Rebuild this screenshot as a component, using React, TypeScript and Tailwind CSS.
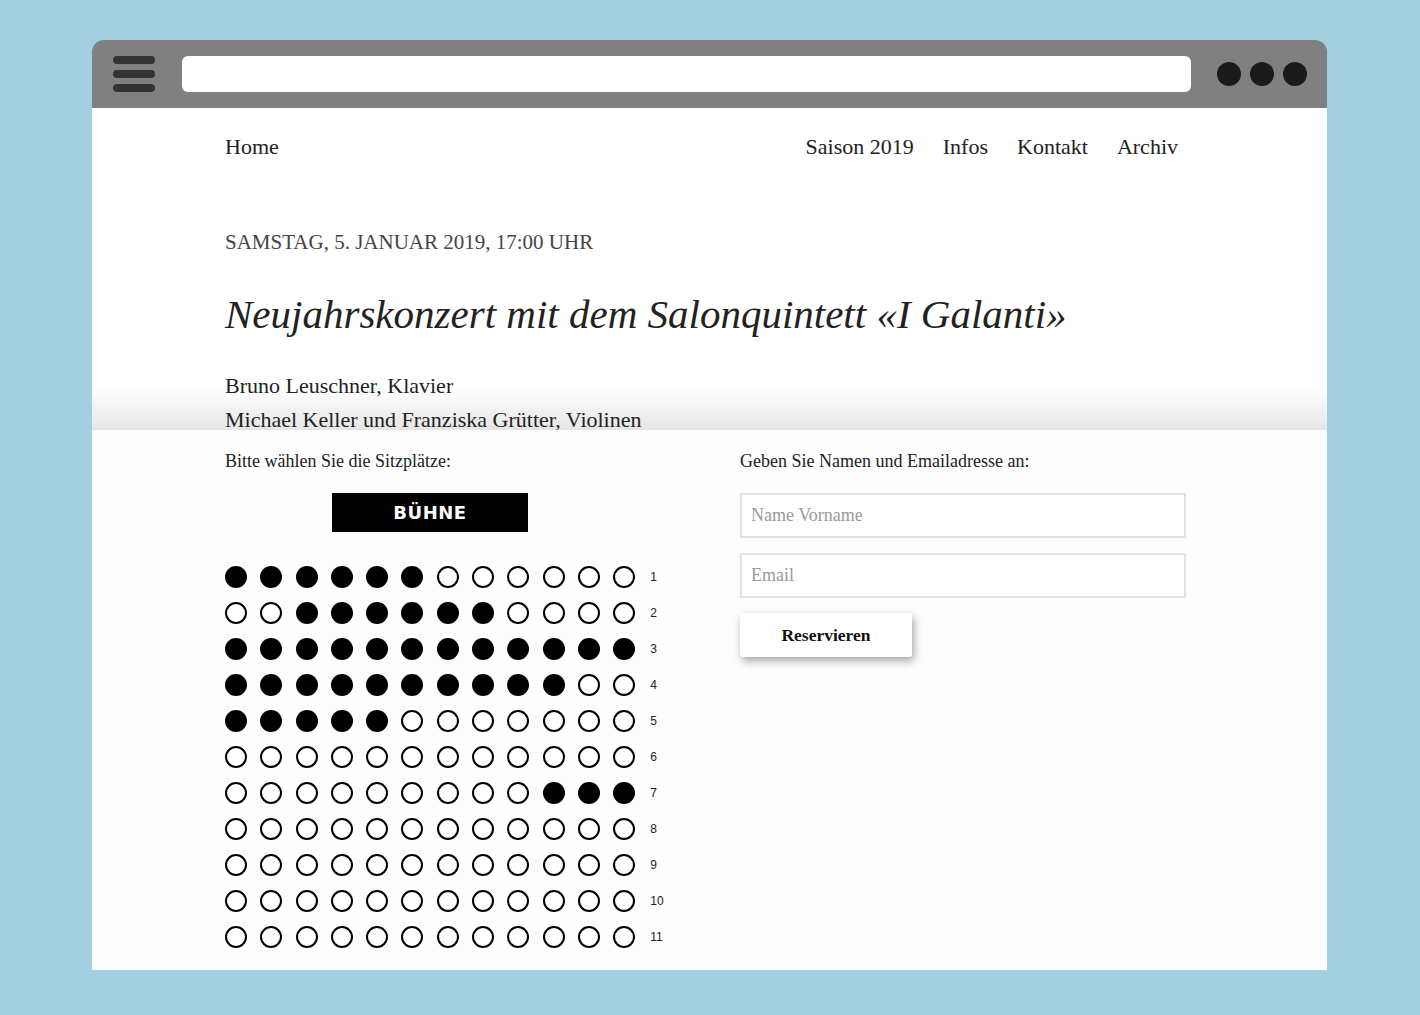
import React from 'react';

const serif = { fontFamily: "'Liberation Serif', 'Times New Roman', serif" };
const sans = { fontFamily: "'Liberation Sans', Arial, sans-serif" };
const heavy = { fontFamily: "'DejaVu Sans', 'Liberation Sans', sans-serif" };

// 1 = taken, 0 = free
const SEATS: number[][] = [
  [1, 1, 1, 1, 1, 1, 0, 0, 0, 0, 0, 0],
  [0, 0, 1, 1, 1, 1, 1, 1, 0, 0, 0, 0],
  [1, 1, 1, 1, 1, 1, 1, 1, 1, 1, 1, 1],
  [1, 1, 1, 1, 1, 1, 1, 1, 1, 1, 0, 0],
  [1, 1, 1, 1, 1, 0, 0, 0, 0, 0, 0, 0],
  [0, 0, 0, 0, 0, 0, 0, 0, 0, 0, 0, 0],
  [0, 0, 0, 0, 0, 0, 0, 0, 0, 1, 1, 1],
  [0, 0, 0, 0, 0, 0, 0, 0, 0, 0, 0, 0],
  [0, 0, 0, 0, 0, 0, 0, 0, 0, 0, 0, 0],
  [0, 0, 0, 0, 0, 0, 0, 0, 0, 0, 0, 0],
  [0, 0, 0, 0, 0, 0, 0, 0, 0, 0, 0, 0],
];

function Seat({ taken }: { taken: boolean }) {
  return taken ? (
    <div className="w-[22px] h-[22px] rounded-full bg-black" />
  ) : (
    <div className="w-[22px] h-[22px] rounded-full border-[2.5px] border-black bg-white" />
  );
}

function SeatMap() {
  return (
    <div className="flex flex-col gap-[14px]">
      {SEATS.map((row, r) => (
        <div key={r} className="flex items-center">
          <div className="flex gap-x-[13.3px]">
            {row.map((s, c) => (
              <Seat key={c} taken={s === 1} />
            ))}
          </div>
          <span className="ml-[15px] text-[12px] text-[#222]" style={sans}>{r + 1}</span>
        </div>
      ))}
    </div>
  );
}

function BrowserBar() {
  return (
    <div className="h-[68px] bg-[#808080] rounded-t-[12px] flex items-center px-[21px]">
      <div className="flex flex-col gap-[6px] w-[42px]">
        <div className="h-[8px] rounded-full bg-[#333333]" />
        <div className="h-[8px] rounded-full bg-[#333333]" />
        <div className="h-[8px] rounded-full bg-[#333333]" />
      </div>
      <div className="ml-[27px] h-[36px] flex-1 bg-white rounded-[6px]" />
      <div className="ml-[26px] mr-[-1px] flex gap-[9px]">
        <div className="w-[24px] h-[24px] rounded-full bg-[#1b1b1b]" />
        <div className="w-[24px] h-[24px] rounded-full bg-[#1b1b1b]" />
        <div className="w-[24px] h-[24px] rounded-full bg-[#1b1b1b]" />
      </div>
    </div>
  );
}

export default function App() {
  return (
    <div className="w-[1420px] h-[1015px] bg-[#a2d0de] pt-[40px] pl-[92px] overflow-hidden" style={serif}>
      <div className="w-[1235px]">
        <BrowserBar />
        <div className="bg-white h-[862px] flex flex-col">
          {/* Event header, scrolled under the booking panel */}
          <section className="relative h-[322px] overflow-hidden">
            <div className="absolute left-0 right-0 bottom-0 h-[42px] bg-gradient-to-b from-white/0 to-[#e6e6e6]" />
            <div className="relative px-[133px]">
              <nav className="flex justify-between items-center mt-[22px] text-[22px] text-[#222] pr-[16px]">
                <a>Home</a>
                <div className="flex gap-[29px]">
                  <a>Saison 2019</a>
                  <a>Infos</a>
                  <a>Kontakt</a>
                  <a>Archiv</a>
                </div>
              </nav>
              <p className="mt-[64px] text-[21px] text-[#444] leading-[30px]">SAMSTAG, 5. JANUAR 2019, 17:00 UHR</p>
              <h1 className="mt-[29px] text-[41px] italic text-[#222] leading-[56px]">
                Neujahrskonzert mit dem Salonquintett «I Galanti»
              </h1>
              <div className="mt-[27px] text-[22px] text-[#222] leading-[34px]">
                <p>Bruno Leuschner, Klavier</p>
                <p>Michael Keller und Franziska Grütter, Violinen</p>
              </div>
            </div>
          </section>

          {/* Reservation panel */}
          <section className="flex-1 bg-[#fdfdfd] px-[133px] flex">
            <div className="w-[515px]">
              <p className="mt-[20px] text-[18px] text-[#222] leading-[22px]">Bitte wählen Sie die Sitzplätze:</p>
              <div className="w-[410px] flex justify-center mt-[21px]">
                <div className="w-[196px] h-[39px] bg-black flex items-center justify-center">
                  <span className="text-white text-[18px] font-bold tracking-[0.5px]" style={heavy}>BÜHNE</span>
                </div>
              </div>
              <div className="mt-[34px]">
                <SeatMap />
              </div>
            </div>
            <div className="w-[446px]">
              <p className="mt-[20px] text-[18px] text-[#222] leading-[22px]">Geben Sie Namen und Emailadresse an:</p>
              <input
                placeholder="Name Vorname"
                className="mt-[21px] w-full h-[45px] border-2 border-[#e3e3e3] bg-white px-[9px] text-[18px] placeholder:text-[#9a9a9a] outline-none"
                style={serif}
              />
              <input
                placeholder="Email"
                className="mt-[15px] w-full h-[45px] border-2 border-[#e3e3e3] bg-white px-[9px] text-[18px] placeholder:text-[#9a9a9a] outline-none"
                style={serif}
              />
              <button
                className="mt-[15px] w-[172px] h-[44px] bg-white rounded-[3px] shadow-[2px_4px_8px_rgba(0,0,0,0.35)] text-[17.5px] font-bold text-[#111]"
                style={serif}
              >
                Reservieren
              </button>
            </div>
          </section>
        </div>
      </div>
    </div>
  );
}
